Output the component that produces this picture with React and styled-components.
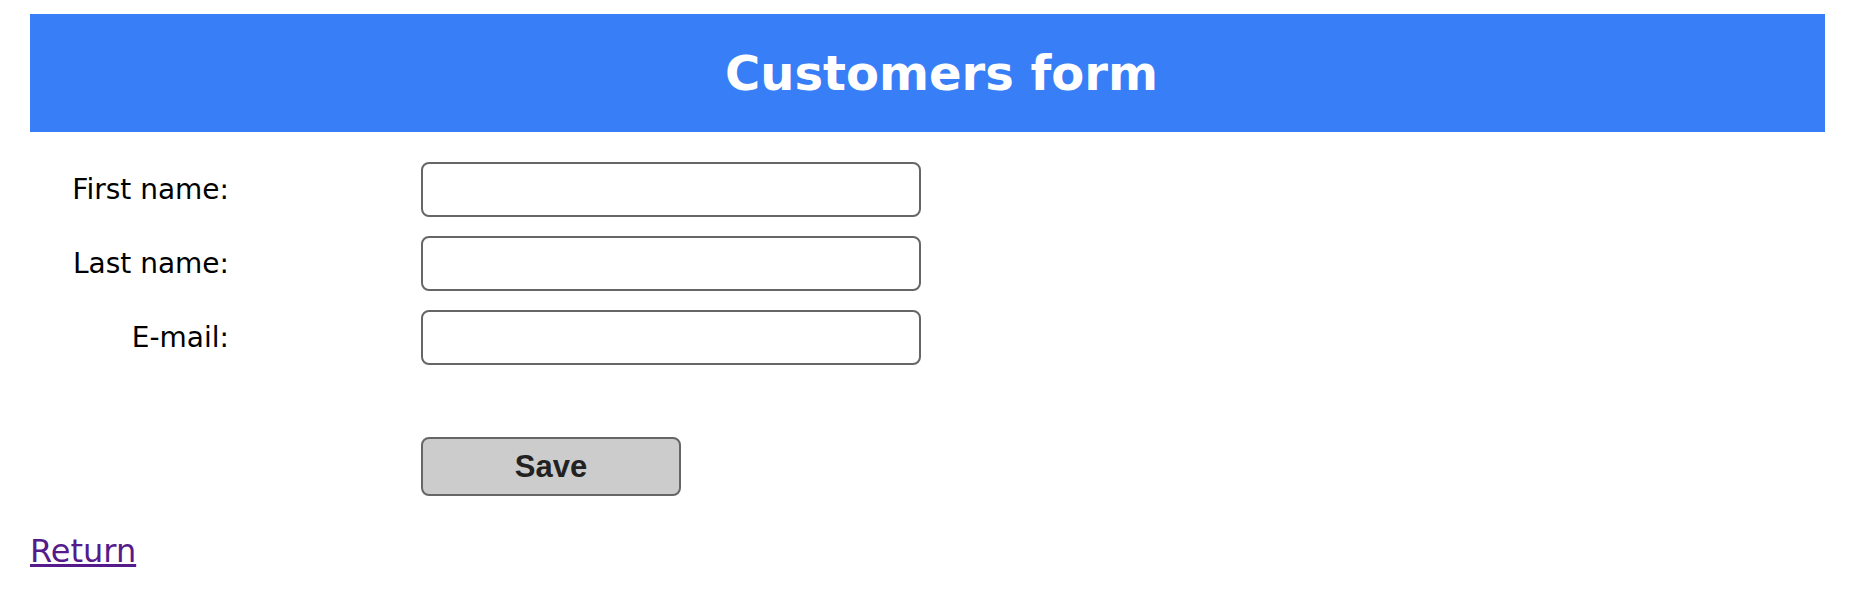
import React from "react";
import styled, { createGlobalStyle } from "styled-components";

const Global = createGlobalStyle`
  body {
    margin: 0;
    background: #fff;
    font-family: "DejaVu Sans", Verdana, sans-serif;
  }
`;

const Page = styled.div`
  padding: 14px 24px 0 30px;
`;

const Header = styled.header`
  height: 118px;
  background: #387ef7;
  display: flex;
  align-items: center;
  justify-content: center;
  padding-left: 28px;
`;

const Title = styled.h1`
  margin: 0;
  color: #fff;
  font-size: 48px;
  font-weight: bold;
`;

const Form = styled.form`
  display: grid;
  grid-template-columns: 199px 500px;
  column-gap: 192px;
  row-gap: 19px;
  margin-top: 30px;
`;

const Label = styled.label`
  align-self: center;
  text-align: right;
  font-size: 28px;
  color: #000;
`;

const Input = styled.input`
  box-sizing: border-box;
  width: 500px;
  height: 55px;
  border: 2px solid #666;
  border-radius: 8px;
  padding: 0 12px;
  font-size: 24px;
  outline: none;
`;

const Save = styled.button`
  grid-column: 2;
  margin-top: 53px;
  box-sizing: border-box;
  width: 260px;
  height: 59px;
  background: #ccc;
  color: #222;
  border: 2px solid #666;
  border-radius: 8px;
  font-family: "Liberation Sans", Arial, sans-serif;
  font-weight: bold;
  font-size: 31px;
  cursor: pointer;
`;

const Return = styled.a`
  display: inline-block;
  margin-top: 36px;
  font-size: 32px;
  color: #551a8b;
  text-decoration: underline;
`;

const fields = [
  { id: "firstName", label: "First name:" },
  { id: "lastName", label: "Last name:" },
  { id: "email", label: "E-mail:" },
];

export default function App() {
  return (
    <Page>
      <Global />
      <Header>
        <Title>Customers form</Title>
      </Header>
      <Form onSubmit={(e) => e.preventDefault()}>
        {fields.map((f) => (
          <React.Fragment key={f.id}>
            <Label htmlFor={f.id}>{f.label}</Label>
            <Input id={f.id} name={f.id} type="text" />
          </React.Fragment>
        ))}
        <Save type="submit">Save</Save>
      </Form>
      <Return href="#">Return</Return>
    </Page>
  );
}
